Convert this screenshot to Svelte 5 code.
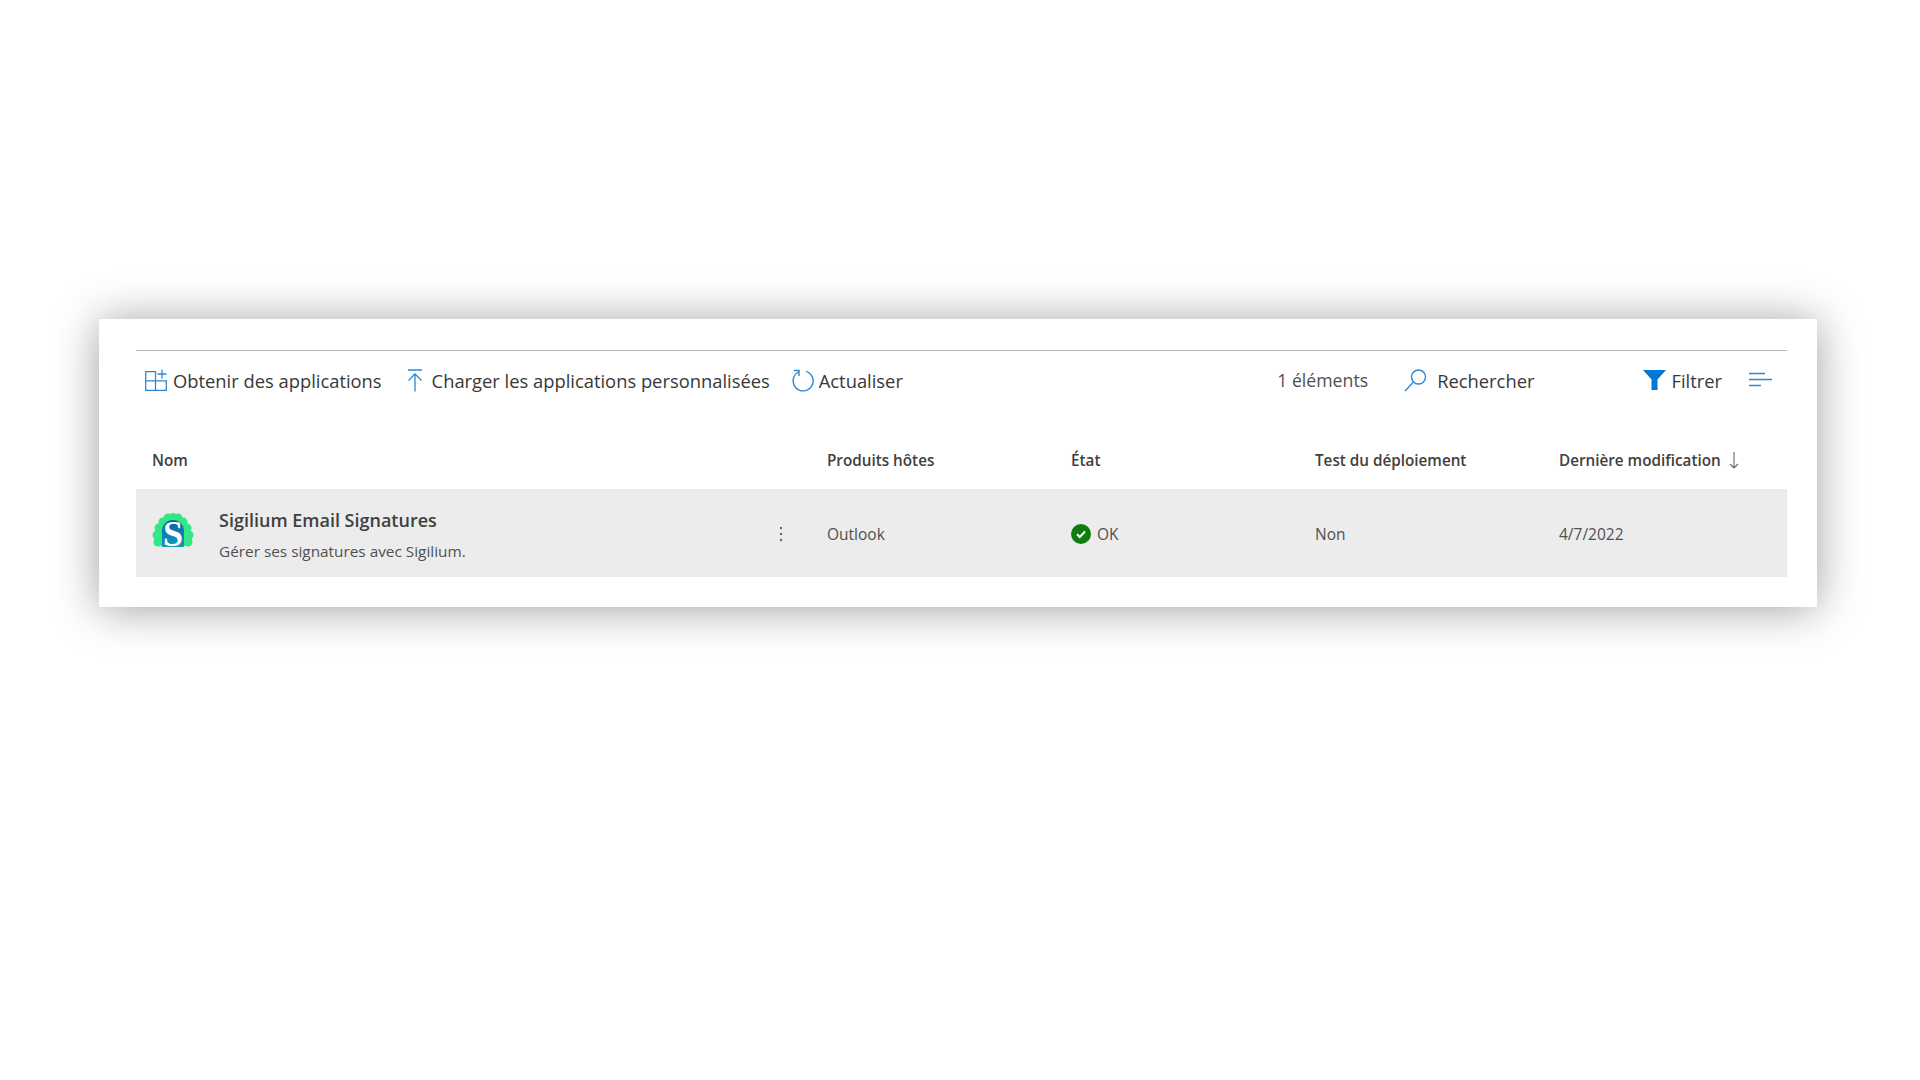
<script lang="ts">
	const columns = ['Produits hôtes', 'État', 'Test du déploiement'];
</script>

<main class="page">
	<section class="card">
		<div class="toolbar">
			<button class="tool first">
				<svg width="23" height="22" viewBox="0 0 23 22" fill="none" stroke="#2b88d8" stroke-width="1.3">
					<path d="M.7 2.7h9.8v9.2h10.8v9.4H.7zM.7 11.900h9.8v9.400M17 .5v9M12.500 5h9" />
				</svg>
				Obtenir des applications
			</button>
			<button class="tool upload">
				<svg width="16" height="23" viewBox="0 0 16 23" fill="none" stroke="#2b88d8" stroke-width="1.3">
					<path d="M1 1h14M8 22.500V5M1.500 11.500 8 5l6.500 6.500" />
				</svg>
				Charger les applications personnalisées
			</button>
			<button class="tool refresh">
				<svg width="23" height="23" viewBox="0 0 23 23" fill="none" stroke="#2b88d8" stroke-width="1.4">
					<path d="M7.500 3A10 10 0 1 0 15 2.300M2.800 1.500h5.200v5.500" />
				</svg>
				Actualiser
			</button>

			<span class="count">1 éléments</span>
			<button class="tool search">
				<svg width="23" height="23" viewBox="0 0 23 23" fill="none" stroke="#2b88d8" stroke-width="1.4">
					<circle cx="14.500" cy="8" r="7" />
					<path d="M9.500 13 1 22" />
				</svg>
				Rechercher
			</button>
			<button class="tool filter">
				<svg width="23" height="20" viewBox="0 0 23 20"><path d="M0 0h23l-8.500 9.500V20h-6V9.500z" fill="#0078d4" /></svg>
				Filtrer
			</button>
			<button class="tool lines" aria-label="Options">
				<svg width="23" height="16" viewBox="0 0 23 16" fill="none" stroke="#2b88d8" stroke-width="1.400">
					<path d="M0 1.500h16M0 7.500h23M0 13.500h12" />
				</svg>
			</button>
		</div>

		<div class="grid head">
			<span>Nom</span>
			{#each columns as column (column)}
				<span>{column}</span>
			{/each}
			<span class="sorted">
				Dernière modification
				<svg width="10" height="18" viewBox="0 0 10 18" fill="none" stroke="#666" stroke-width="1.100">
					<path d="M5 1v16M1 13l4 4 4-4" />
				</svg>
			</span>
		</div>

		<div class="grid row">
			<div class="name">
				<svg class="logo" width="42" height="44" viewBox="0 0 42 44">
					<defs>
						<linearGradient id="blue" x1="0" y1="0" x2="0" y2="1">
							<stop offset="0" stop-color="#0a5fb0" />
							<stop offset="1" stop-color="#149ab8" />
						</linearGradient>
					</defs>
					<g fill="#33e884">
						<circle cx="6" cy="29" r="4.500" />
						<circle cx="5" cy="22" r="4.500" />
						<circle cx="7" cy="15" r="4.500" />
						<circle cx="11" cy="9" r="4.500" />
						<circle cx="16" cy="5" r="4.500" />
						<circle cx="21" cy="4.500" r="4.500" />
						<circle cx="26" cy="5" r="4.500" />
						<circle cx="31" cy="9" r="4.500" />
						<circle cx="35" cy="15" r="4.500" />
						<circle cx="37" cy="22" r="4.500" />
						<circle cx="36" cy="29" r="4.500" />
						<path d="M6 33V14L21 4l15 10v19H30V20H12v13z" />
					</g>
					<path d="M10 34V18a11 11 0 0 1 22 0v16z" fill="url(#blue)" />
					<text x="21" y="33" class="logo-letter">S</text>
				</svg>
				<div class="title">
					<strong>Sigilium Email Signatures</strong>
					<small>Gérer ses signatures avec Sigilium.</small>
				</div>
				<svg class="more" width="4" height="16" viewBox="0 0 4 16" fill="#666">
					<circle cx="2" cy="2" r="1.200" />
					<circle cx="2" cy="8" r="1.200" />
					<circle cx="2" cy="14" r="1.200" />
				</svg>
			</div>
			<span>Outlook</span>
			<span class="status">
				<svg width="20" height="20" viewBox="0 0 20 20">
					<circle cx="10" cy="10" r="10" fill="#107c10" />
					<path d="M6 10.200 8.800 13 14 7.500" fill="none" stroke="#fff" stroke-width="2" />
				</svg>
				OK
			</span>
			<span>Non</span>
			<span>4/7/2022</span>
		</div>
	</section>
</main>

<style>
	:global(body) {
		background: #fff;
	}

	.page {
		height: 1080px;
		padding: 319px 0 0 99px;
		box-sizing: border-box;
		overflow: hidden;
		font-family: 'Open Sans', 'Noto Sans', sans-serif;
		color: #404040;
	}

	.card {
		width: 1718px;
		height: 288px;
		box-sizing: border-box;
		padding: 31px 30px 0 37px;
		background: #fff;
		box-shadow: 0 2px 42px rgba(0, 0, 0, 0.38);
	}

	.toolbar {
		display: flex;
		align-items: center;
		height: 60px;
		padding-bottom: 1px;
		box-sizing: border-box;
		border-top: 1px solid #b9b9b9;
	}

	.tool {
		display: flex;
		align-items: center;
		gap: 6px;
		padding: 0;
		border: 0;
		background: none;
		color: #383838;
		font: inherit;
		font-size: 18.35px;
		white-space: nowrap;
	}

	.first {
		margin-left: 9px;
		gap: 5px;
	}

	.upload {
		margin-left: 25px;
		gap: 9px;
	}

	.refresh {
		margin-left: 21px;
		gap: 5px;
	}

	.count {
		margin-left: auto;
		font-size: 17.7px;
		color: #505050;
	}

	.search {
		margin-left: 36px;
		gap: 10px;
	}

	.filter {
		margin-left: 109px;
		gap: 5px;
	}

	.lines {
		margin: 0 15px 0 27px;
	}

	.grid {
		display: grid;
		grid-template-columns: 675px 244px 244px 244px 1fr;
		align-items: center;
		padding-left: 16px;
	}

	.head {
		height: 79px;
		padding-top: 20px;
		box-sizing: border-box;
		font-size: 15.25px;
		font-weight: 600;
		color: #404040;
	}

	.sorted {
		display: flex;
		align-items: center;
		gap: 8px;
	}

	.row {
		height: 88px;
		padding-top: 1px;
		box-sizing: border-box;
		background: #ececec;
		font-size: 15.5px;
		color: #505050;
	}

	.name {
		display: flex;
		align-items: center;
	}

	.logo {
		margin-left: 0;
		margin-top: 3px;
		flex: none;
	}

	.logo-letter {
		font-family: 'Liberation Serif', serif;
		font-size: 36px;
		font-weight: 700;
		fill: #fff;
		text-anchor: middle;
	}

	.title {
		display: flex;
		flex-direction: column;
		gap: 9px;
		margin-left: 25px;
		margin-top: 1px;
	}

	.title strong {
		font-size: 18px;
		font-weight: 600;
		color: #404040;
	}

	.title small {
		font-size: 15.35px;
		color: #505050;
	}

	.more {
		margin-left: auto;
		margin-right: 44px;
	}

	.status {
		display: flex;
		align-items: center;
		gap: 6px;
	}
</style>
